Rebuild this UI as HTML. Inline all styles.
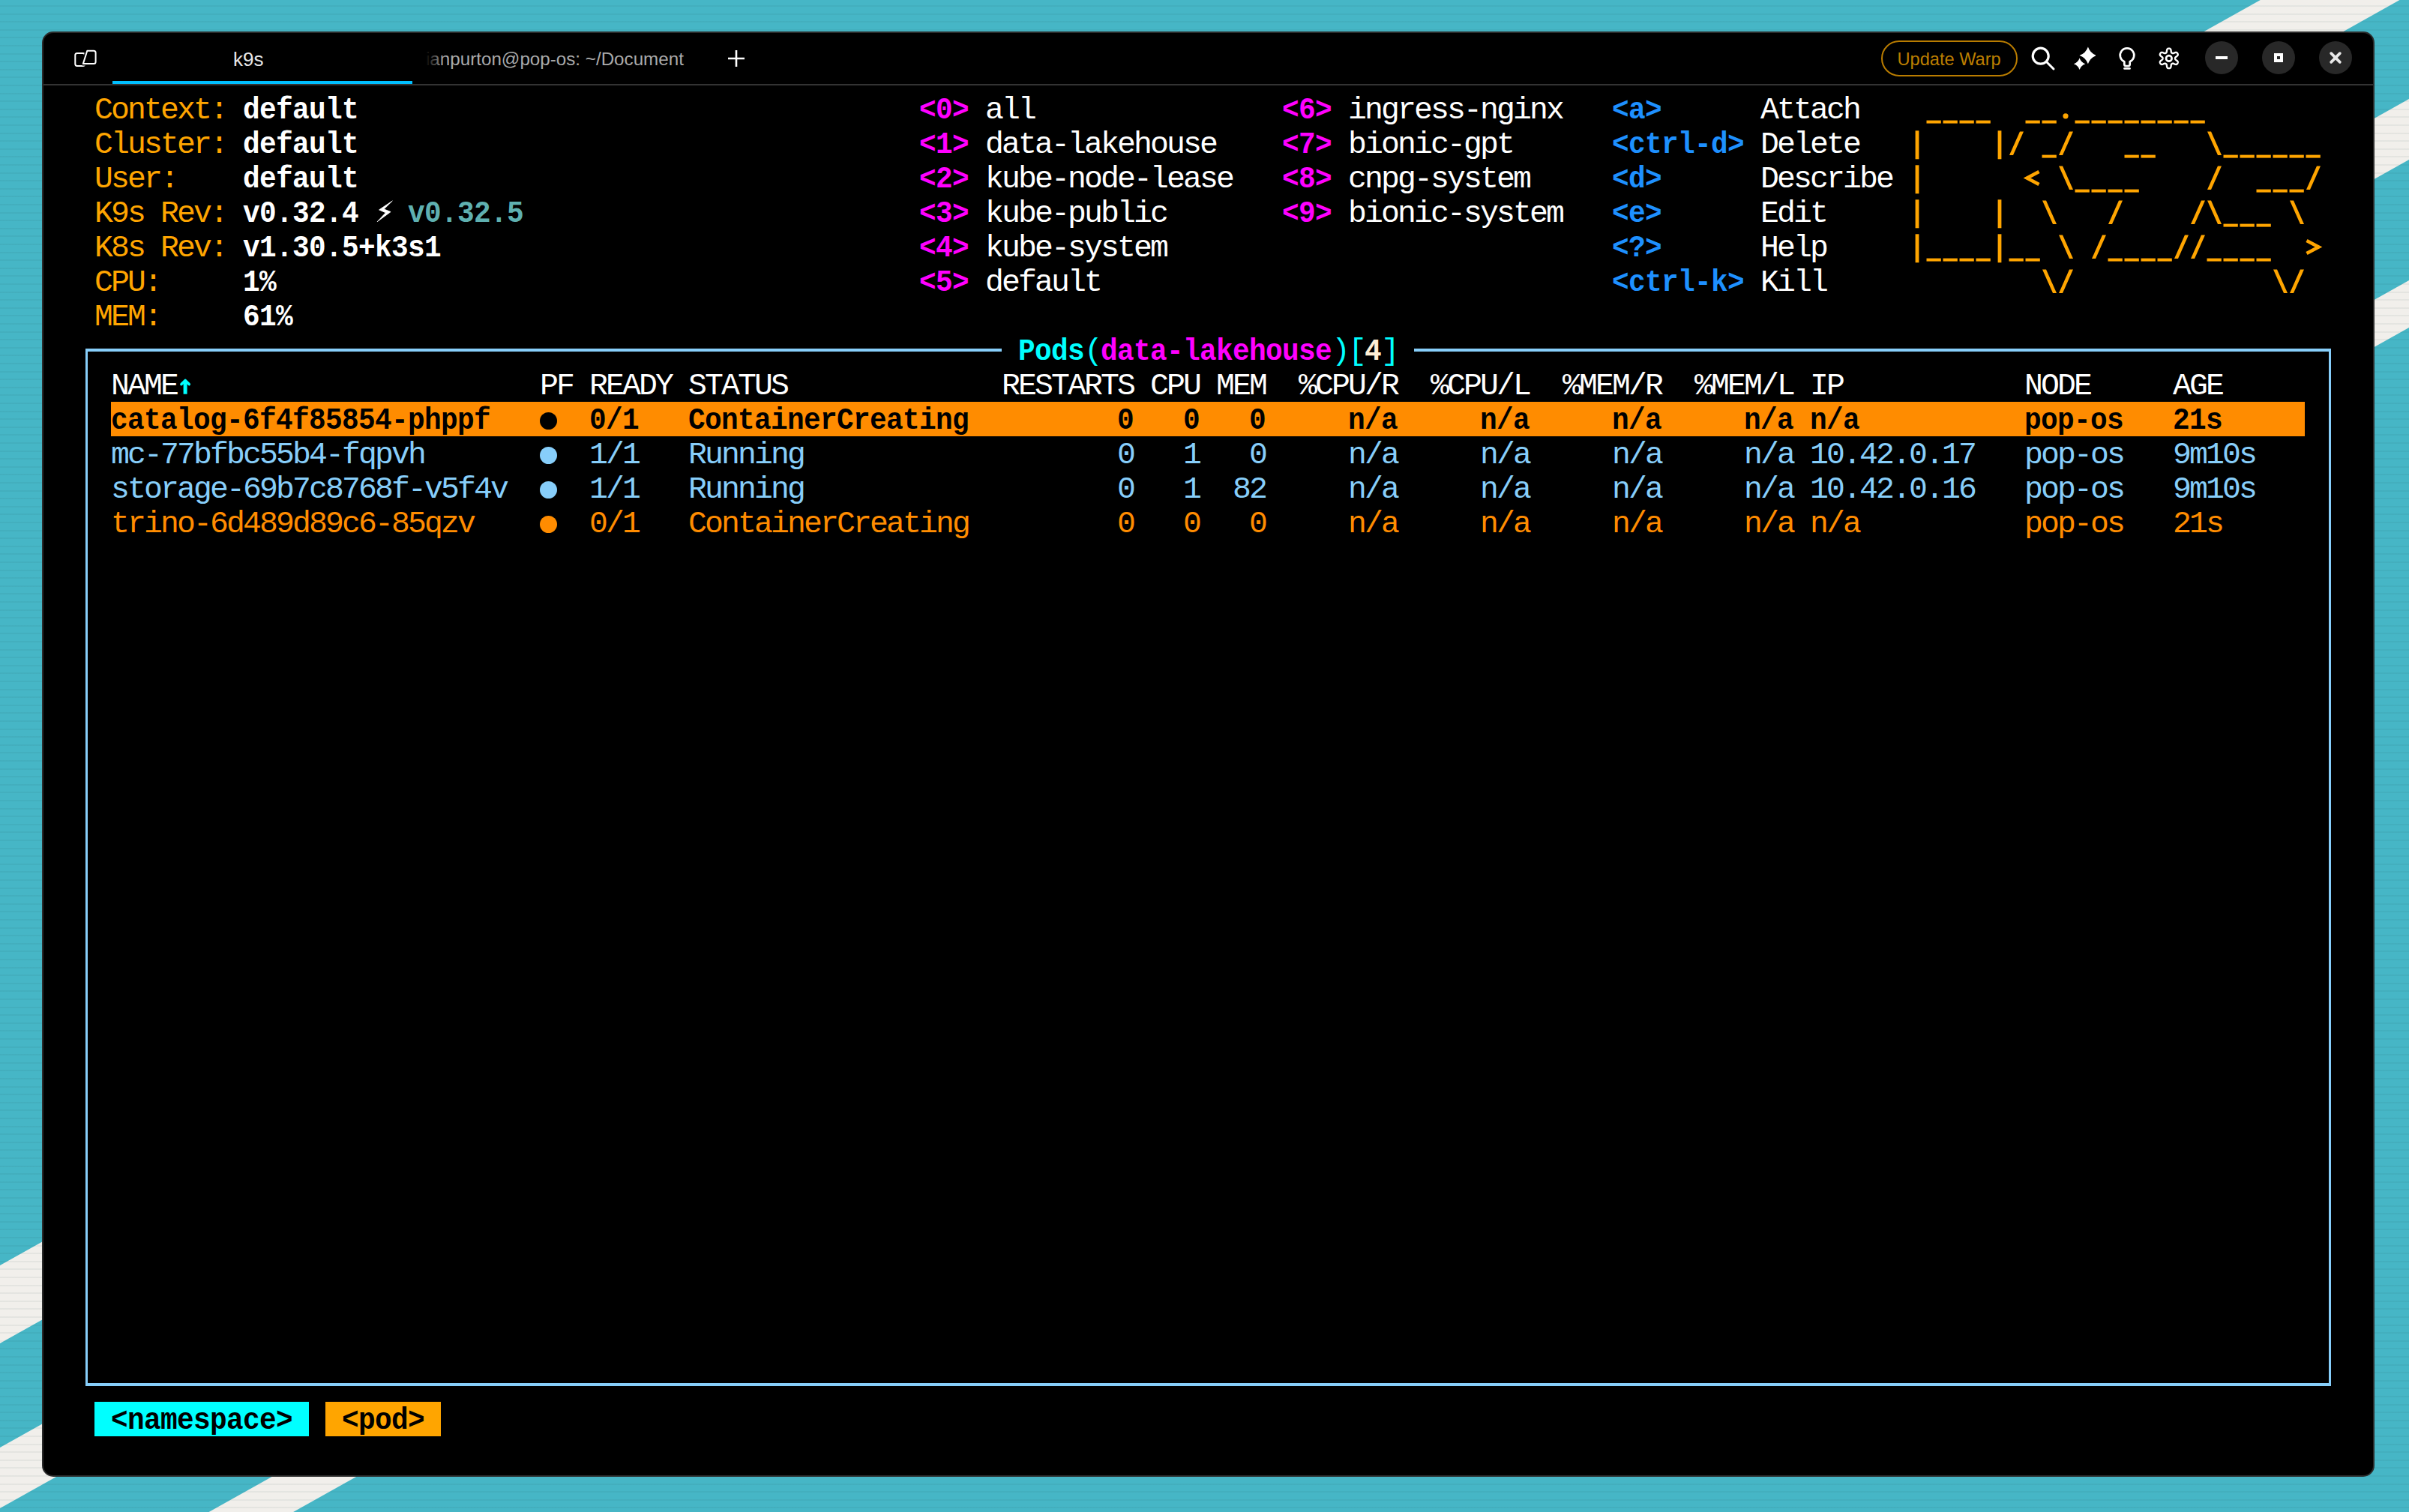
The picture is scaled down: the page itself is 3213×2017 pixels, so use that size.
<!DOCTYPE html>
<html><head><meta charset="utf-8">
<style>
html,body{margin:0;padding:0;}
body{width:3213px;height:2017px;position:relative;overflow:hidden;background:#46b6c6;}
.m{position:absolute;font-family:"Liberation Mono",monospace;font-size:41.5px;line-height:46px;letter-spacing:-2.9041px;white-space:pre;}
.b{font-weight:bold;transform:scaleX(0.91);transform-origin:0 0;letter-spacing:-0.7282px;}
.win{position:absolute;left:56px;top:42px;width:3111px;height:1928px;box-sizing:border-box;background:#000;border:2px solid #2b2b2b;border-radius:15px;}
.dot{position:absolute;width:23px;height:23px;border-radius:50%;}
.sans{position:absolute;font-family:"Liberation Sans",sans-serif;white-space:pre;}
</style></head><body>
<svg width="3213" height="2017" style="position:absolute;left:0;top:0">
<polygon fill="#f1efeb" points="0,1688 3213,-111 3213,-7 0,1792"/>
<polygon fill="#f1efeb" points="0,1931 3213,132 3213,213 0,2012"/>
<polygon fill="#f1efeb" points="0,2173 3213,374 3213,437 0,2236"/>
</svg>
<div style="position:absolute;left:0;top:0;width:3213px;height:2017px;background:repeating-linear-gradient(180deg,rgba(0,0,0,0) 0px,rgba(0,0,0,0) 7px,rgba(20,60,60,0.06) 7px,rgba(20,60,60,0.06) 9px,rgba(0,0,0,0) 9px,rgba(0,0,0,0) 10.6px)"></div>
<div class="win"></div>
<!-- tab bar -->
<div style="position:absolute;left:58px;top:112px;width:3107px;height:2px;background:#333"></div>
<div style="position:absolute;left:150px;top:108px;width:400px;height:4px;background:#00bfff"></div>
<svg width="36" height="28" style="position:absolute;left:97px;top:65px" viewBox="0 0 36 28">
 <rect x="3.3" y="5.9" width="12.9" height="17" rx="2.6" fill="none" stroke="#fff" stroke-width="2"/>
 <path d="M19.3 2.8 H28 Q30.6 2.8 30.6 5.4 V17.5 Q30.6 20.1 28 20.1 H13.8 Z" fill="#000" stroke="#000" stroke-width="5" stroke-linejoin="round"/>
 <path d="M19.3 2.8 H28 Q30.6 2.8 30.6 5.4 V17.5 Q30.6 20.1 28 20.1 H13.8 Z" fill="none" stroke="#fff" stroke-width="2" stroke-linejoin="round"/>
</svg>
<div class="sans" style="left:311px;top:64px;font-size:26px;color:#e8e8e8">k9s</div>
<div class="sans" style="left:568px;top:64.8px;font-size:24.2px;color:#aaaaaa">ianpurton@pop-os: ~/Document</div>
<div style="position:absolute;left:560px;top:60px;width:32px;height:40px;background:linear-gradient(90deg,#000 25%,rgba(0,0,0,0))"></div>
<svg width="24" height="24" style="position:absolute;left:970px;top:66px"><path d="M12 1 V23 M1 12 H23" stroke="#fff" stroke-width="2.6"/></svg>
<div style="position:absolute;left:2509px;top:54px;width:182px;height:48px;box-sizing:border-box;border:2px solid #b97c00;border-radius:24px"></div>
<div class="sans" style="left:2530.5px;top:65.6px;font-size:23.6px;color:#bc7e00">Update Warp</div>
<!-- icons -->
<svg width="40" height="40" style="position:absolute;left:2705px;top:58px" viewBox="0 0 40 40">
 <circle cx="16.7" cy="16.7" r="10.5" fill="none" stroke="#fff" stroke-width="3.2"/>
 <path d="M24.5 24.5 L34 34" stroke="#fff" stroke-width="3" stroke-linecap="round"/>
</svg>
<svg width="40" height="40" style="position:absolute;left:2755px;top:55px" viewBox="0 0 40 40">
 <path d="M29.90 7.50 Q32.75 16.05 41.30 18.90 Q32.75 21.75 29.90 30.30 Q27.05 21.75 18.50 18.90 Q27.05 16.05 29.90 7.50 Z" fill="#fff"/><path d="M18.60 22.50 Q20.53 28.27 26.30 30.20 Q20.53 32.12 18.60 37.90 Q16.68 32.12 10.90 30.20 Q16.68 28.27 18.60 22.50 Z" fill="#fff"/>
</svg>
<svg width="40" height="40" style="position:absolute;left:2817px;top:58px" viewBox="0 0 40 40">
 <path d="M16.3 24.2 L16.3 27.8 Q16.3 30 18.5 30 L21.5 30 Q23.7 30 23.7 27.8 L23.7 24.2 A9.3 9.3 0 1 0 16.3 24.2 Z" fill="none" stroke="#fff" stroke-width="2.7" stroke-linejoin="round"/>
 <path d="M16.6 33.4 H23.4" stroke="#fff" stroke-width="2.9" stroke-linecap="round"/>
</svg>
<svg width="40" height="40" style="position:absolute;left:2873px;top:58px" viewBox="0 0 40 40">
 <path d="M28.05 19.90 L28.06 20.12 L28.07 20.33 L28.11 20.55 L28.17 20.78 L28.28 21.02 L28.45 21.27 L28.71 21.55 L29.10 21.88 L29.61 22.25 L30.18 22.68 L30.75 23.14 L31.20 23.61 L31.52 24.05 L31.70 24.47 L31.77 24.86 L31.75 25.22 L31.68 25.57 L31.58 25.90 L31.44 26.22 L31.27 26.52 L31.09 26.82 L30.88 27.10 L30.65 27.36 L30.38 27.59 L30.07 27.78 L29.70 27.92 L29.25 27.98 L28.71 27.92 L28.08 27.76 L27.40 27.50 L26.74 27.22 L26.16 26.97 L25.69 26.79 L25.31 26.70 L25.00 26.68 L24.75 26.71 L24.52 26.77 L24.31 26.85 L24.11 26.94 L23.93 27.04 L23.74 27.16 L23.56 27.28 L23.39 27.42 L23.22 27.59 L23.07 27.80 L22.94 28.07 L22.83 28.45 L22.74 28.94 L22.66 29.57 L22.58 30.28 L22.46 31.00 L22.29 31.63 L22.07 32.13 L21.79 32.49 L21.49 32.74 L21.17 32.91 L20.83 33.03 L20.49 33.10 L20.15 33.14 L19.80 33.15 L19.45 33.14 L19.11 33.10 L18.77 33.03 L18.43 32.91 L18.11 32.74 L17.81 32.49 L17.53 32.13 L17.31 31.63 L17.14 31.00 L17.02 30.28 L16.94 29.57 L16.86 28.94 L16.77 28.45 L16.66 28.07 L16.53 27.80 L16.38 27.59 L16.21 27.42 L16.04 27.28 L15.86 27.16 L15.68 27.04 L15.49 26.94 L15.29 26.85 L15.08 26.77 L14.85 26.71 L14.60 26.68 L14.29 26.70 L13.91 26.79 L13.44 26.97 L12.86 27.22 L12.20 27.50 L11.52 27.76 L10.89 27.92 L10.35 27.98 L9.90 27.92 L9.53 27.78 L9.22 27.59 L8.95 27.36 L8.72 27.10 L8.51 26.82 L8.33 26.52 L8.16 26.22 L8.02 25.90 L7.92 25.57 L7.85 25.22 L7.83 24.86 L7.90 24.47 L8.08 24.05 L8.40 23.61 L8.85 23.14 L9.42 22.68 L9.99 22.25 L10.50 21.88 L10.89 21.55 L11.15 21.27 L11.32 21.02 L11.43 20.78 L11.49 20.55 L11.53 20.33 L11.54 20.12 L11.55 19.90 L11.54 19.68 L11.53 19.47 L11.49 19.25 L11.43 19.02 L11.32 18.78 L11.15 18.53 L10.89 18.25 L10.50 17.92 L9.99 17.55 L9.42 17.12 L8.85 16.66 L8.40 16.19 L8.08 15.75 L7.90 15.33 L7.83 14.94 L7.85 14.58 L7.92 14.23 L8.02 13.90 L8.16 13.58 L8.33 13.27 L8.51 12.98 L8.72 12.70 L8.95 12.44 L9.22 12.21 L9.53 12.02 L9.90 11.88 L10.35 11.82 L10.89 11.88 L11.52 12.04 L12.20 12.30 L12.86 12.58 L13.44 12.83 L13.91 13.01 L14.29 13.10 L14.60 13.12 L14.85 13.09 L15.08 13.03 L15.29 12.95 L15.49 12.86 L15.67 12.76 L15.86 12.64 L16.04 12.52 L16.21 12.38 L16.38 12.21 L16.53 12.00 L16.66 11.73 L16.77 11.35 L16.86 10.86 L16.94 10.23 L17.02 9.52 L17.14 8.80 L17.31 8.17 L17.53 7.67 L17.81 7.31 L18.11 7.06 L18.43 6.89 L18.77 6.77 L19.11 6.70 L19.45 6.66 L19.80 6.65 L20.15 6.66 L20.49 6.70 L20.83 6.77 L21.17 6.89 L21.49 7.06 L21.79 7.31 L22.07 7.67 L22.29 8.17 L22.46 8.80 L22.58 9.52 L22.66 10.23 L22.74 10.86 L22.83 11.35 L22.94 11.73 L23.07 12.00 L23.22 12.21 L23.39 12.38 L23.56 12.52 L23.74 12.64 L23.93 12.76 L24.11 12.86 L24.31 12.95 L24.52 13.03 L24.75 13.09 L25.00 13.12 L25.31 13.10 L25.69 13.01 L26.16 12.83 L26.74 12.58 L27.40 12.30 L28.08 12.04 L28.71 11.88 L29.25 11.82 L29.70 11.88 L30.07 12.02 L30.38 12.21 L30.65 12.44 L30.88 12.70 L31.09 12.98 L31.27 13.27 L31.44 13.58 L31.58 13.90 L31.68 14.23 L31.75 14.58 L31.77 14.94 L31.70 15.33 L31.52 15.75 L31.20 16.19 L30.75 16.66 L30.18 17.12 L29.61 17.55 L29.10 17.92 L28.71 18.25 L28.45 18.53 L28.28 18.78 L28.17 19.02 L28.11 19.25 L28.07 19.47 L28.06 19.68 L28.05 19.90 Z" fill="none" stroke="#fff" stroke-width="2.4" stroke-linejoin="round"/>
 <circle cx="19.8" cy="19.9" r="3.8" fill="none" stroke="#fff" stroke-width="2.7"/>
</svg>
<!-- window controls -->
<div style="position:absolute;left:2941px;top:55px;width:44px;height:44px;border-radius:50%;background:#282828"></div>
<div style="position:absolute;left:2955px;top:75px;width:16px;height:4px;background:#fff"></div>
<div style="position:absolute;left:3017px;top:55px;width:44px;height:44px;border-radius:50%;background:#282828"></div>
<div style="position:absolute;left:3033px;top:71px;width:12px;height:12px;box-sizing:border-box;border:4px solid #fff"></div>
<div style="position:absolute;left:3093px;top:55px;width:44px;height:44px;border-radius:50%;background:#282828"></div>
<svg width="44" height="44" style="position:absolute;left:3093px;top:55px"><path d="M16.2 16.2 L27.8 27.8 M27.8 16.2 L16.2 27.8" stroke="#e8e8e8" stroke-width="3.8" stroke-linecap="round"/></svg>
<!-- terminal -->
<div style="position:absolute;left:114px;top:465px;width:1222px;height:3.5px;background:#87cefa"></div>
<div style="position:absolute;left:1886px;top:465px;width:1223px;height:3.5px;background:#87cefa"></div>
<div style="position:absolute;left:114px;top:465px;width:3.3px;height:1384px;background:#87cefa"></div>
<div style="position:absolute;left:3106px;top:465px;width:3.3px;height:1384px;background:#87cefa"></div>
<div style="position:absolute;left:114px;top:1845px;width:2995px;height:3.5px;background:#87cefa"></div>
<div style="position:absolute;left:148px;top:536px;width:2926px;height:46px;background:#ff8c00"></div>
<div style="position:absolute;left:126px;top:1870px;width:286px;height:46px;background:#00ffff"></div>
<div style="position:absolute;left:434px;top:1870px;width:154px;height:46px;background:#ffa500"></div>
<div class="dot" style="left:719.5px;top:549.5px;background:#000000"></div>
<div class="dot" style="left:719.5px;top:595.5px;background:#87cefa"></div>
<div class="dot" style="left:719.5px;top:641.5px;background:#87cefa"></div>
<div class="dot" style="left:719.5px;top:687.5px;background:#ff8c00"></div>
<span class="m" style="left:126.00px;top:123.96px;color:#ffa500">Context:</span>
<span class="m b" style="left:324.00px;top:123.96px;color:#ffffff">default</span>
<span class="m" style="left:126.00px;top:169.96px;color:#ffa500">Cluster:</span>
<span class="m b" style="left:324.00px;top:169.96px;color:#ffffff">default</span>
<span class="m" style="left:126.00px;top:215.96px;color:#ffa500">User:</span>
<span class="m b" style="left:324.00px;top:215.96px;color:#ffffff">default</span>
<span class="m" style="left:126.00px;top:261.96px;color:#ffa500">K9s Rev:</span>
<span class="m b" style="left:324.00px;top:261.96px;color:#ffffff">v0.32.4</span>
<span class="m" style="left:126.00px;top:307.96px;color:#ffa500">K8s Rev:</span>
<span class="m b" style="left:324.00px;top:307.96px;color:#ffffff">v1.30.5+k3s1</span>
<span class="m" style="left:126.00px;top:353.96px;color:#ffa500">CPU:</span>
<span class="m b" style="left:324.00px;top:353.96px;color:#ffffff">1%</span>
<span class="m" style="left:126.00px;top:399.96px;color:#ffa500">MEM:</span>
<span class="m b" style="left:324.00px;top:399.96px;color:#ffffff">61%</span>
<span class="m b" style="left:544.00px;top:261.96px;color:#5fb0b0">v0.32.5</span>
<span class="m b" style="left:1226.00px;top:123.96px;color:#ff00ff">&lt;0&gt;</span>
<span class="m" style="left:1314.00px;top:123.96px;color:#ffffff">all</span>
<span class="m b" style="left:1226.00px;top:169.96px;color:#ff00ff">&lt;1&gt;</span>
<span class="m" style="left:1314.00px;top:169.96px;color:#ffffff">data-lakehouse</span>
<span class="m b" style="left:1226.00px;top:215.96px;color:#ff00ff">&lt;2&gt;</span>
<span class="m" style="left:1314.00px;top:215.96px;color:#ffffff">kube-node-lease</span>
<span class="m b" style="left:1226.00px;top:261.96px;color:#ff00ff">&lt;3&gt;</span>
<span class="m" style="left:1314.00px;top:261.96px;color:#ffffff">kube-public</span>
<span class="m b" style="left:1226.00px;top:307.96px;color:#ff00ff">&lt;4&gt;</span>
<span class="m" style="left:1314.00px;top:307.96px;color:#ffffff">kube-system</span>
<span class="m b" style="left:1226.00px;top:353.96px;color:#ff00ff">&lt;5&gt;</span>
<span class="m" style="left:1314.00px;top:353.96px;color:#ffffff">default</span>
<span class="m b" style="left:1710.00px;top:123.96px;color:#ff00ff">&lt;6&gt;</span>
<span class="m" style="left:1798.00px;top:123.96px;color:#ffffff">ingress-nginx</span>
<span class="m b" style="left:1710.00px;top:169.96px;color:#ff00ff">&lt;7&gt;</span>
<span class="m" style="left:1798.00px;top:169.96px;color:#ffffff">bionic-gpt</span>
<span class="m b" style="left:1710.00px;top:215.96px;color:#ff00ff">&lt;8&gt;</span>
<span class="m" style="left:1798.00px;top:215.96px;color:#ffffff">cnpg-system</span>
<span class="m b" style="left:1710.00px;top:261.96px;color:#ff00ff">&lt;9&gt;</span>
<span class="m" style="left:1798.00px;top:261.96px;color:#ffffff">bionic-system</span>
<span class="m b" style="left:2150.00px;top:123.96px;color:#1e90ff">&lt;a&gt;</span>
<span class="m" style="left:2348.00px;top:123.96px;color:#ffffff">Attach</span>
<span class="m b" style="left:2150.00px;top:169.96px;color:#1e90ff">&lt;ctrl-d&gt;</span>
<span class="m" style="left:2348.00px;top:169.96px;color:#ffffff">Delete</span>
<span class="m b" style="left:2150.00px;top:215.96px;color:#1e90ff">&lt;d&gt;</span>
<span class="m" style="left:2348.00px;top:215.96px;color:#ffffff">Describe</span>
<span class="m b" style="left:2150.00px;top:261.96px;color:#1e90ff">&lt;e&gt;</span>
<span class="m" style="left:2348.00px;top:261.96px;color:#ffffff">Edit</span>
<span class="m b" style="left:2150.00px;top:307.96px;color:#1e90ff">&lt;?&gt;</span>
<span class="m" style="left:2348.00px;top:307.96px;color:#ffffff">Help</span>
<span class="m b" style="left:2150.00px;top:353.96px;color:#1e90ff">&lt;ctrl-k&gt;</span>
<span class="m" style="left:2348.00px;top:353.96px;color:#ffffff">Kill</span>
<span class="m b" style="left:1358.00px;top:445.96px;color:#00ffff">Pods</span>
<span class="m" style="left:1446.00px;top:445.96px;color:#00ffff">(</span>
<span class="m b" style="left:1468.00px;top:445.96px;color:#ff00ff">data-lakehouse</span>
<span class="m" style="left:1776.00px;top:445.96px;color:#00ffff">)</span>
<span class="m" style="left:1798.00px;top:445.96px;color:#00ffff">[</span>
<span class="m b" style="left:1820.00px;top:445.96px;color:#ffefd5">4</span>
<span class="m" style="left:1842.00px;top:445.96px;color:#00ffff">]</span>
<span class="m" style="left:148.00px;top:491.96px;color:#ffffff">NAME</span>
<span class="m" style="left:720.00px;top:491.96px;color:#ffffff">PF</span>
<span class="m" style="left:786.00px;top:491.96px;color:#ffffff">READY</span>
<span class="m" style="left:918.00px;top:491.96px;color:#ffffff">STATUS</span>
<span class="m" style="left:1336.00px;top:491.96px;color:#ffffff">RESTARTS</span>
<span class="m" style="left:1534.00px;top:491.96px;color:#ffffff">CPU</span>
<span class="m" style="left:1622.00px;top:491.96px;color:#ffffff">MEM</span>
<span class="m" style="left:1732.00px;top:491.96px;color:#ffffff">%CPU/R</span>
<span class="m" style="left:1908.00px;top:491.96px;color:#ffffff">%CPU/L</span>
<span class="m" style="left:2084.00px;top:491.96px;color:#ffffff">%MEM/R</span>
<span class="m" style="left:2260.00px;top:491.96px;color:#ffffff">%MEM/L</span>
<span class="m" style="left:2414.00px;top:491.96px;color:#ffffff">IP</span>
<span class="m" style="left:2700.00px;top:491.96px;color:#ffffff">NODE</span>
<span class="m" style="left:2898.00px;top:491.96px;color:#ffffff">AGE</span>
<span class="m b" style="left:148.00px;top:537.96px;color:#000000">catalog-6f4f85854-phppf</span>
<span class="m b" style="left:786.00px;top:537.96px;color:#000000">0/1</span>
<span class="m b" style="left:918.00px;top:537.96px;color:#000000">ContainerCreating</span>
<span class="m b" style="left:1490.00px;top:537.96px;color:#000000">0</span>
<span class="m b" style="left:1578.00px;top:537.96px;color:#000000">0</span>
<span class="m b" style="left:1666.00px;top:537.96px;color:#000000">0</span>
<span class="m b" style="left:1798.00px;top:537.96px;color:#000000">n/a</span>
<span class="m b" style="left:1974.00px;top:537.96px;color:#000000">n/a</span>
<span class="m b" style="left:2150.00px;top:537.96px;color:#000000">n/a</span>
<span class="m b" style="left:2326.00px;top:537.96px;color:#000000">n/a</span>
<span class="m b" style="left:2414.00px;top:537.96px;color:#000000">n/a</span>
<span class="m b" style="left:2700.00px;top:537.96px;color:#000000">pop-os</span>
<span class="m b" style="left:2898.00px;top:537.96px;color:#000000">21s</span>
<span class="m" style="left:148.00px;top:583.96px;color:#87cefa">mc-77bfbc55b4-fqpvh</span>
<span class="m" style="left:786.00px;top:583.96px;color:#87cefa">1/1</span>
<span class="m" style="left:918.00px;top:583.96px;color:#87cefa">Running</span>
<span class="m" style="left:1490.00px;top:583.96px;color:#87cefa">0</span>
<span class="m" style="left:1578.00px;top:583.96px;color:#87cefa">1</span>
<span class="m" style="left:1666.00px;top:583.96px;color:#87cefa">0</span>
<span class="m" style="left:1798.00px;top:583.96px;color:#87cefa">n/a</span>
<span class="m" style="left:1974.00px;top:583.96px;color:#87cefa">n/a</span>
<span class="m" style="left:2150.00px;top:583.96px;color:#87cefa">n/a</span>
<span class="m" style="left:2326.00px;top:583.96px;color:#87cefa">n/a</span>
<span class="m" style="left:2414.00px;top:583.96px;color:#87cefa">10.42.0.17</span>
<span class="m" style="left:2700.00px;top:583.96px;color:#87cefa">pop-os</span>
<span class="m" style="left:2898.00px;top:583.96px;color:#87cefa">9m10s</span>
<span class="m" style="left:148.00px;top:629.96px;color:#87cefa">storage-69b7c8768f-v5f4v</span>
<span class="m" style="left:786.00px;top:629.96px;color:#87cefa">1/1</span>
<span class="m" style="left:918.00px;top:629.96px;color:#87cefa">Running</span>
<span class="m" style="left:1490.00px;top:629.96px;color:#87cefa">0</span>
<span class="m" style="left:1578.00px;top:629.96px;color:#87cefa">1</span>
<span class="m" style="left:1644.00px;top:629.96px;color:#87cefa">82</span>
<span class="m" style="left:1798.00px;top:629.96px;color:#87cefa">n/a</span>
<span class="m" style="left:1974.00px;top:629.96px;color:#87cefa">n/a</span>
<span class="m" style="left:2150.00px;top:629.96px;color:#87cefa">n/a</span>
<span class="m" style="left:2326.00px;top:629.96px;color:#87cefa">n/a</span>
<span class="m" style="left:2414.00px;top:629.96px;color:#87cefa">10.42.0.16</span>
<span class="m" style="left:2700.00px;top:629.96px;color:#87cefa">pop-os</span>
<span class="m" style="left:2898.00px;top:629.96px;color:#87cefa">9m10s</span>
<span class="m" style="left:148.00px;top:675.96px;color:#ff8c00">trino-6d489d89c6-85qzv</span>
<span class="m" style="left:786.00px;top:675.96px;color:#ff8c00">0/1</span>
<span class="m" style="left:918.00px;top:675.96px;color:#ff8c00">ContainerCreating</span>
<span class="m" style="left:1490.00px;top:675.96px;color:#ff8c00">0</span>
<span class="m" style="left:1578.00px;top:675.96px;color:#ff8c00">0</span>
<span class="m" style="left:1666.00px;top:675.96px;color:#ff8c00">0</span>
<span class="m" style="left:1798.00px;top:675.96px;color:#ff8c00">n/a</span>
<span class="m" style="left:1974.00px;top:675.96px;color:#ff8c00">n/a</span>
<span class="m" style="left:2150.00px;top:675.96px;color:#ff8c00">n/a</span>
<span class="m" style="left:2326.00px;top:675.96px;color:#ff8c00">n/a</span>
<span class="m" style="left:2414.00px;top:675.96px;color:#ff8c00">n/a</span>
<span class="m" style="left:2700.00px;top:675.96px;color:#ff8c00">pop-os</span>
<span class="m" style="left:2898.00px;top:675.96px;color:#ff8c00">21s</span>
<span class="m b" style="left:148.00px;top:1871.96px;color:#000000">&lt;namespace&gt;</span>
<span class="m b" style="left:456.00px;top:1871.96px;color:#000000">&lt;pod&gt;</span>
<svg width="3213" height="500" style="position:absolute;left:0;top:0"><rect x="2569.5" y="160.6" width="19.3" height="4" fill="#ffa500"/><rect x="2591.5" y="160.6" width="19.3" height="4" fill="#ffa500"/><rect x="2613.5" y="160.6" width="19.3" height="4" fill="#ffa500"/><rect x="2635.5" y="160.6" width="19.3" height="4" fill="#ffa500"/><rect x="2701.5" y="160.6" width="19.3" height="4" fill="#ffa500"/><rect x="2723.5" y="160.6" width="19.3" height="4" fill="#ffa500"/><circle cx="2755.0" cy="154.8" r="3.6" fill="#ffa500"/><rect x="2767.5" y="160.6" width="19.3" height="4" fill="#ffa500"/><rect x="2789.5" y="160.6" width="19.3" height="4" fill="#ffa500"/><rect x="2811.5" y="160.6" width="19.3" height="4" fill="#ffa500"/><rect x="2833.5" y="160.6" width="19.3" height="4" fill="#ffa500"/><rect x="2855.5" y="160.6" width="19.3" height="4" fill="#ffa500"/><rect x="2877.5" y="160.6" width="19.3" height="4" fill="#ffa500"/><rect x="2899.5" y="160.6" width="19.3" height="4" fill="#ffa500"/><rect x="2921.5" y="160.6" width="19.3" height="4" fill="#ffa500"/><rect x="2554.6" y="174.3" width="4.8" height="38" fill="#ffa500"/><rect x="2664.6" y="174.3" width="4.8" height="38" fill="#ffa500"/><polygon points="2680.0,207.0 2685.0,207.0 2699.0,175.5 2694.0,175.5" fill="#ffa500"/><rect x="2723.5" y="206.6" width="19.3" height="4" fill="#ffa500"/><polygon points="2746.0,207.0 2751.0,207.0 2765.0,175.5 2760.0,175.5" fill="#ffa500"/><rect x="2833.5" y="206.6" width="19.3" height="4" fill="#ffa500"/><rect x="2855.5" y="206.6" width="19.3" height="4" fill="#ffa500"/><polygon points="2944.0,175.5 2949.0,175.5 2963.0,207.0 2958.0,207.0" fill="#ffa500"/><rect x="2965.5" y="206.6" width="19.3" height="4" fill="#ffa500"/><rect x="2987.5" y="206.6" width="19.3" height="4" fill="#ffa500"/><rect x="3009.5" y="206.6" width="19.3" height="4" fill="#ffa500"/><rect x="3031.5" y="206.6" width="19.3" height="4" fill="#ffa500"/><rect x="3053.5" y="206.6" width="19.3" height="4" fill="#ffa500"/><rect x="3075.5" y="206.6" width="19.3" height="4" fill="#ffa500"/><rect x="2554.6" y="220.3" width="4.8" height="38" fill="#ffa500"/><polyline points="2719.5,229.0 2703.5,237.5 2719.5,246.0" fill="none" stroke="#ffa500" stroke-width="4.6" stroke-linejoin="miter"/><polygon points="2746.0,221.5 2751.0,221.5 2765.0,253.0 2760.0,253.0" fill="#ffa500"/><rect x="2767.5" y="252.6" width="19.3" height="4" fill="#ffa500"/><rect x="2789.5" y="252.6" width="19.3" height="4" fill="#ffa500"/><rect x="2811.5" y="252.6" width="19.3" height="4" fill="#ffa500"/><rect x="2833.5" y="252.6" width="19.3" height="4" fill="#ffa500"/><polygon points="2944.0,253.0 2949.0,253.0 2963.0,221.5 2958.0,221.5" fill="#ffa500"/><rect x="3009.5" y="252.6" width="19.3" height="4" fill="#ffa500"/><rect x="3031.5" y="252.6" width="19.3" height="4" fill="#ffa500"/><rect x="3053.5" y="252.6" width="19.3" height="4" fill="#ffa500"/><polygon points="3076.0,253.0 3081.0,253.0 3095.0,221.5 3090.0,221.5" fill="#ffa500"/><rect x="2554.6" y="266.3" width="4.8" height="38" fill="#ffa500"/><rect x="2664.6" y="266.3" width="4.8" height="38" fill="#ffa500"/><polygon points="2724.0,267.5 2729.0,267.5 2743.0,299.0 2738.0,299.0" fill="#ffa500"/><polygon points="2812.0,299.0 2817.0,299.0 2831.0,267.5 2826.0,267.5" fill="#ffa500"/><polygon points="2922.0,299.0 2927.0,299.0 2941.0,267.5 2936.0,267.5" fill="#ffa500"/><polygon points="2944.0,267.5 2949.0,267.5 2963.0,299.0 2958.0,299.0" fill="#ffa500"/><rect x="2965.5" y="298.6" width="19.3" height="4" fill="#ffa500"/><rect x="2987.5" y="298.6" width="19.3" height="4" fill="#ffa500"/><rect x="3009.5" y="298.6" width="19.3" height="4" fill="#ffa500"/><polygon points="3054.0,267.5 3059.0,267.5 3073.0,299.0 3068.0,299.0" fill="#ffa500"/><rect x="2554.6" y="312.3" width="4.8" height="38" fill="#ffa500"/><rect x="2569.5" y="344.6" width="19.3" height="4" fill="#ffa500"/><rect x="2591.5" y="344.6" width="19.3" height="4" fill="#ffa500"/><rect x="2613.5" y="344.6" width="19.3" height="4" fill="#ffa500"/><rect x="2635.5" y="344.6" width="19.3" height="4" fill="#ffa500"/><rect x="2664.6" y="312.3" width="4.8" height="38" fill="#ffa500"/><rect x="2679.5" y="344.6" width="19.3" height="4" fill="#ffa500"/><rect x="2701.5" y="344.6" width="19.3" height="4" fill="#ffa500"/><polygon points="2746.0,313.5 2751.0,313.5 2765.0,345.0 2760.0,345.0" fill="#ffa500"/><polygon points="2790.0,345.0 2795.0,345.0 2809.0,313.5 2804.0,313.5" fill="#ffa500"/><rect x="2811.5" y="344.6" width="19.3" height="4" fill="#ffa500"/><rect x="2833.5" y="344.6" width="19.3" height="4" fill="#ffa500"/><rect x="2855.5" y="344.6" width="19.3" height="4" fill="#ffa500"/><rect x="2877.5" y="344.6" width="19.3" height="4" fill="#ffa500"/><polygon points="2900.0,345.0 2905.0,345.0 2919.0,313.5 2914.0,313.5" fill="#ffa500"/><polygon points="2922.0,345.0 2927.0,345.0 2941.0,313.5 2936.0,313.5" fill="#ffa500"/><rect x="2943.5" y="344.6" width="19.3" height="4" fill="#ffa500"/><rect x="2965.5" y="344.6" width="19.3" height="4" fill="#ffa500"/><rect x="2987.5" y="344.6" width="19.3" height="4" fill="#ffa500"/><rect x="3009.5" y="344.6" width="19.3" height="4" fill="#ffa500"/><polyline points="3076.5,321.0 3092.5,329.5 3076.5,338.0" fill="none" stroke="#ffa500" stroke-width="4.6" stroke-linejoin="miter"/><polygon points="2724.0,359.5 2729.0,359.5 2743.0,391.0 2738.0,391.0" fill="#ffa500"/><polygon points="2746.0,391.0 2751.0,391.0 2765.0,359.5 2760.0,359.5" fill="#ffa500"/><polygon points="3032.0,359.5 3037.0,359.5 3051.0,391.0 3046.0,391.0" fill="#ffa500"/><polygon points="3054.0,391.0 3059.0,391.0 3073.0,359.5 3068.0,359.5" fill="#ffa500"/></svg>
<svg width="50" height="45" style="position:absolute;left:490px;top:260px" viewBox="0 0 50 45"><path d="M33.3 8 L15.6 19.9 L24.4 23.8 L13.2 35.7 L31.1 22.6 L22.2 19 Z" fill="#fff" stroke="#fff" stroke-width="0.8" stroke-linejoin="round"/></svg>
<svg width="22" height="32" style="position:absolute;left:236px;top:496px" viewBox="0 0 22 32"><path d="M6 16.6 L11.1 11.4 L16.2 16.6" fill="none" stroke="#00ffff" stroke-width="3.6" stroke-linecap="round" stroke-linejoin="round"/><path d="M11.1 12.5 V29.7" stroke="#00ffff" stroke-width="5"/></svg>
</body></html>
